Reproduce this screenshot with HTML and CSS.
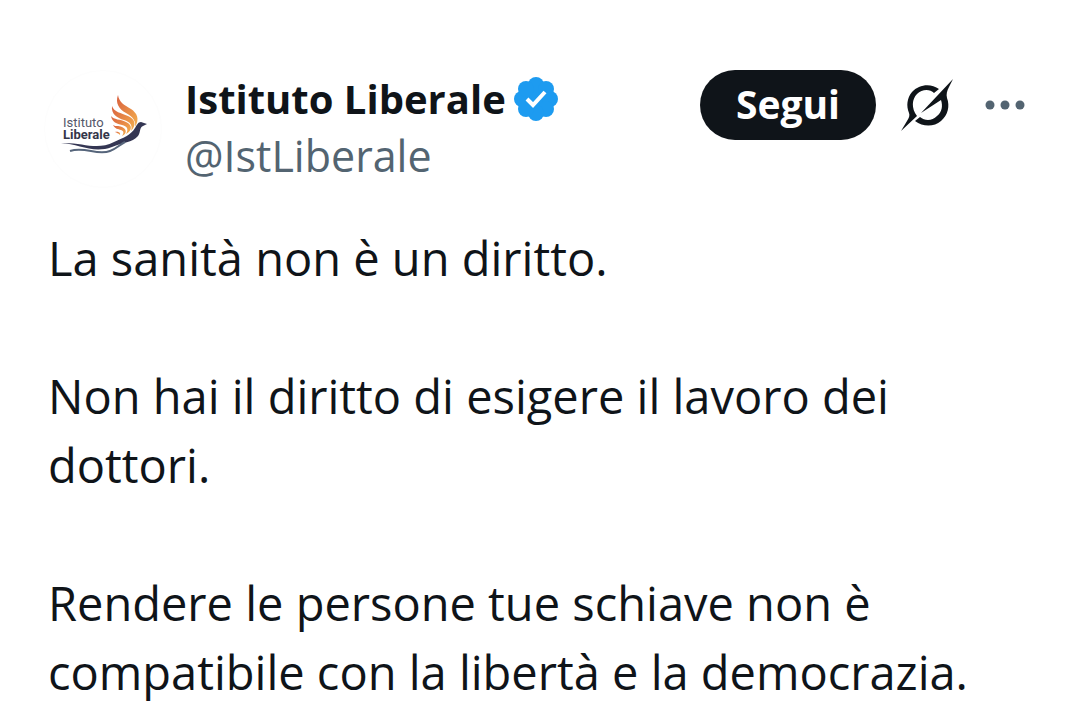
FILE: index.html
```html
<!DOCTYPE html>
<html lang="it">
<head>
<meta charset="utf-8">
<meta name="viewport" content="width=device-width, initial-scale=1">
<title>Istituto Liberale</title>
<link rel="stylesheet" href="styles.css">
</head>
<body>
<article class="post">
  <header class="post-header">
    <a class="avatar" href="#" aria-label="Profilo di Istituto Liberale">
      <svg class="avatar-logo" viewBox="0 0 116 116" aria-hidden="true">
        <defs>
          <linearGradient id="flame" x1="0" y1="0" x2="1" y2="1">
            <stop offset="0" stop-color="#d9603f"/>
            <stop offset="1" stop-color="#f4b04e"/>
          </linearGradient>
        </defs>
        <g fill="url(#flame)">
          <path d="M73 24C70 32 74 38 81 42C88 46 91 50 90 56C95 48 92 42 86 38C79 34 74 31 73 24Z"/>
          <path d="M67 35C66 43 72 47 79 49C85 51 88 54 86 60C92 54 90 48 83 45C76 42 69 41 67 35Z"/>
          <path d="M66 45C67 51 72 53 77 54C82 55 84 58 81 63C87 60 88 54 81 51C75 48 69 49 66 45Z"/>
          <path d="M68 54C70 58 73 58 76 59C79 60 79 62 77 65C82 63 82 58 77 56C73 54 71 56 68 54Z"/>
          <path d="M70 61C72 60 76 61 75 64C73 62 72 62 70 61Z"/>
        </g>
        <path fill="#343653" d="M102 53L96 51C93 51 92 54 90 57C86 64 78 67 69 71C51 80 38 71 16 72C34 73 48 83 67 76C78 71 87 72 93 65C96 61 94 57 98 55Z"/>
        <path fill="none" stroke="#56657b" stroke-width="2" d="M25 80C40 75 52 85 65 80C71 78 74 74 80 71"/>
        <text class="logo-text" x="18" y="56">Istituto<tspan class="logo-bold" x="18" y="68">Liberale</tspan></text>
      </svg>
    </a>
    <div class="author">
      <div class="name-row">
        <a class="name" href="#">Istituto Liberale</a>
        <svg class="verified" viewBox="0 0 46 46" role="img" aria-label="Account verificato">
          <g fill="#1d9bf0">
            <circle cx="23" cy="23" r="18"/>
            <circle cx="23" cy="9" r="8"/><circle cx="33" cy="13" r="8"/>
            <circle cx="37" cy="23" r="8"/><circle cx="33" cy="33" r="8"/>
            <circle cx="23" cy="37" r="8"/><circle cx="13" cy="33" r="8"/>
            <circle cx="9" cy="23" r="8"/><circle cx="13" cy="13" r="8"/>
          </g>
          <path d="M14 23L20 29L32 16" fill="none" stroke="#fff" stroke-width="4"/>
        </svg>
      </div>
      <a class="handle" href="#">@IstLiberale</a>
    </div>
    <div class="actions">
      <button class="follow" type="button">Segui</button>
      <button class="icon-button" type="button" aria-label="Grok">
        <svg class="grok" viewBox="0 0 54 54" fill="#0f1419" aria-hidden="true">
          <path d="M39 11C31 5 19 6 12 14C7 20 6 28 9 35C10 37 9 40 7 43L1 53L17 38C11 30 12 21 17 16C22 11 30 11 34 15Z"/>
          <path d="M53 1L21 35L41 22C43 28 42 34 37 38C32 43 25 43 20 39L15 43C23 49 34 49 41 43C48 37 50 28 47 20C46 16 47 13 49 9Z"/>
        </svg>
      </button>
      <button class="icon-button" type="button" aria-label="Altro">
        <svg class="more" viewBox="0 0 42 12" fill="#536471" aria-hidden="true">
          <circle cx="6" cy="6" r="4.500"/><circle cx="21" cy="6" r="4.500"/><circle cx="36" cy="6" r="4.500"/>
        </svg>
      </button>
    </div>
  </header>
  <div class="post-text">
    <p>La sanità non è un diritto.</p>
    <p>Non hai il diritto di esigere il lavoro dei dottori.</p>
    <p>Rendere le persone tue schiave non è compatibile con la libertà e la democrazia.</p>
  </div>
</article>
</body>
</html>
```
FILE: styles.css
```css
* {
  box-sizing: border-box;
}

body {
  margin: 0;
  background: #fff;
  color: #0f1419;
  font-family: "Open Sans", "Noto Sans", sans-serif;
}

a {
  color: inherit;
  text-decoration: none;
}

button {
  margin: 0;
  padding: 0;
  border: 0;
  background: none;
  color: inherit;
  font: inherit;
  cursor: pointer;
}

svg {
  display: block;
}

.post {
  padding: 70px 48px 16px;
}

.post-header {
  display: flex;
  align-items: flex-start;
}

.avatar {
  flex: none;
  margin-left: -4px;
  border: 1px solid #fdfdfd;
  border-radius: 50%;
}

.avatar-logo {
  width: 116px;
  height: 116px;
}

.logo-text {
  font-family: Roboto, sans-serif;
  font-size: 13px;
  fill: #55586a;
}

.logo-bold {
  font-weight: 700;
  fill: #34364a;
}

.author {
  flex: 1;
  min-width: 0;
  padding-left: 23px;
}

.name-row {
  display: flex;
  align-items: center;
  gap: 7px;
}

.name {
  font-size: 40px;
  font-weight: 700;
  line-height: 58px;
  white-space: nowrap;
}

.verified {
  flex: none;
  width: 46px;
  height: 46px;
}

.handle {
  display: block;
  color: #536471;
  font-size: 43px;
  line-height: 56px;
}

.actions {
  display: flex;
  align-items: center;
  padding-right: 5px;
}

.follow {
  height: 70px;
  margin-right: 24px;
  padding: 0 36px 2px;
  border-radius: 35px;
  background: #0f1419;
  color: #fff;
  font-size: 39px;
  font-weight: 700;
  line-height: 68px;
}

.icon-button {
  flex: none;
}

.grok {
  width: 54px;
  height: 54px;
}

.more {
  width: 42px;
  height: 12px;
  margin-left: 30px;
}

.post-text {
  padding-top: 36px;
  font-size: 47px;
  line-height: 69px;
}

.post-text p {
  margin: 0 0 69px;
}

.post-text p:last-child {
  margin-bottom: 0;
}
```
